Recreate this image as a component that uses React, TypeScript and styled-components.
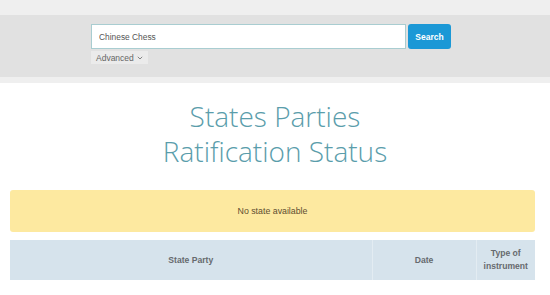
import React from "react";
import styled, { createGlobalStyle } from "styled-components";

const GlobalStyle = createGlobalStyle`
  html, body { margin: 0; padding: 0; background: #ffffff; }
  body { font-family: "Liberation Sans", Arial, sans-serif; color: #555; }
  * { box-sizing: border-box; }
`;

const Page = styled.div`
  width: 550px;
  overflow: hidden;
`;

const Header = styled.header`
  background: #efefef;
  padding: 15px 0 6px;
`;

const SearchBand = styled.div`
  background: #e1e1e1;
  height: 62px;
  padding: 9px 0 0 91px;
`;

const SearchRow = styled.form`
  display: flex;
  gap: 2px;
  margin: 0;
`;

const SearchInput = styled.input`
  width: 315px;
  height: 25px;
  border: 1px solid #a9cdd1;
  background: #ffffff;
  padding: 0 7px;
  font-family: "Liberation Sans", Arial, sans-serif;
  font-size: 8.4px;
  color: #555;
  outline: none;
  border-radius: 0;
`;

const SearchButton = styled.button`
  width: 43px;
  height: 25px;
  border: none;
  border-radius: 3px;
  background: #1b98d6;
  color: #ffffff;
  font-family: "Liberation Sans", Arial, sans-serif;
  font-weight: bold;
  font-size: 8.5px;
  padding: 0;
  cursor: pointer;
`;

const AdvancedToggle = styled.button`
  margin-top: 2px;
  display: flex;
  align-items: center;
  gap: 3px;
  height: 13px;
  padding: 0 5px;
  border: none;
  background: #ebebeb;
  color: #666;
  font-family: "Liberation Sans", Arial, sans-serif;
  font-size: 8.5px;
  cursor: pointer;
`;

const Main = styled.main`
  padding: 0 15px 0 10px;
`;

const Title = styled.h1`
  margin: 16px 0 21px;
  text-align: center;
  font-family: "Open Sans", sans-serif;
  font-weight: 300;
  font-size: 28px;
  line-height: 35px;
  color: #5a9dab;
  padding-left: 5px;
`;

const Alert = styled.div`
  height: 42px;
  display: flex;
  align-items: center;
  justify-content: center;
  background: #fde9a0;
  border-radius: 3px;
  color: #5e4e30;
  font-size: 8.8px;
  margin-bottom: 8px;
`;

const Table = styled.table`
  width: 100%;
  border-collapse: collapse;
`;

const HeadCell = styled.th<{ $w?: number }>`
  background: #d6e3ec;
  height: 40px;
  padding: 0 6px;
  font-size: 8.6px;
  line-height: 13px;
  font-weight: bold;
  color: #666a6e;
  text-align: center;
  width: ${(p) => (p.$w ? `${p.$w}px` : "auto")};
  border-left: 1px solid #e3ecf2;
  &:first-child { border-left: none; }
`;

const Chevron = () => (
  <svg width="6" height="4" viewBox="0 0 6 4" fill="none">
    <path d="M0.8 0.8 L3 3 L5.2 0.8" stroke="#777" strokeWidth="0.9" />
  </svg>
);

export default function App() {
  return (
    <Page>
      <GlobalStyle />
      <Header>
        <SearchBand>
          <SearchRow onSubmit={(e) => e.preventDefault()}>
            <SearchInput defaultValue="Chinese Chess" aria-label="Search" />
            <SearchButton type="submit">Search</SearchButton>
          </SearchRow>
          <AdvancedToggle type="button">
            Advanced <Chevron />
          </AdvancedToggle>
        </SearchBand>
      </Header>
      <Main>
        <Title>
          States Parties
          <br />
          Ratification Status
        </Title>
        <Alert>No state available</Alert>
        <Table>
          <thead>
            <tr>
              <HeadCell>State Party</HeadCell>
              <HeadCell $w={104}>Date</HeadCell>
              <HeadCell $w={59}>
                Type of
                <br />
                instrument
              </HeadCell>
            </tr>
          </thead>
        </Table>
      </Main>
    </Page>
  );
}
